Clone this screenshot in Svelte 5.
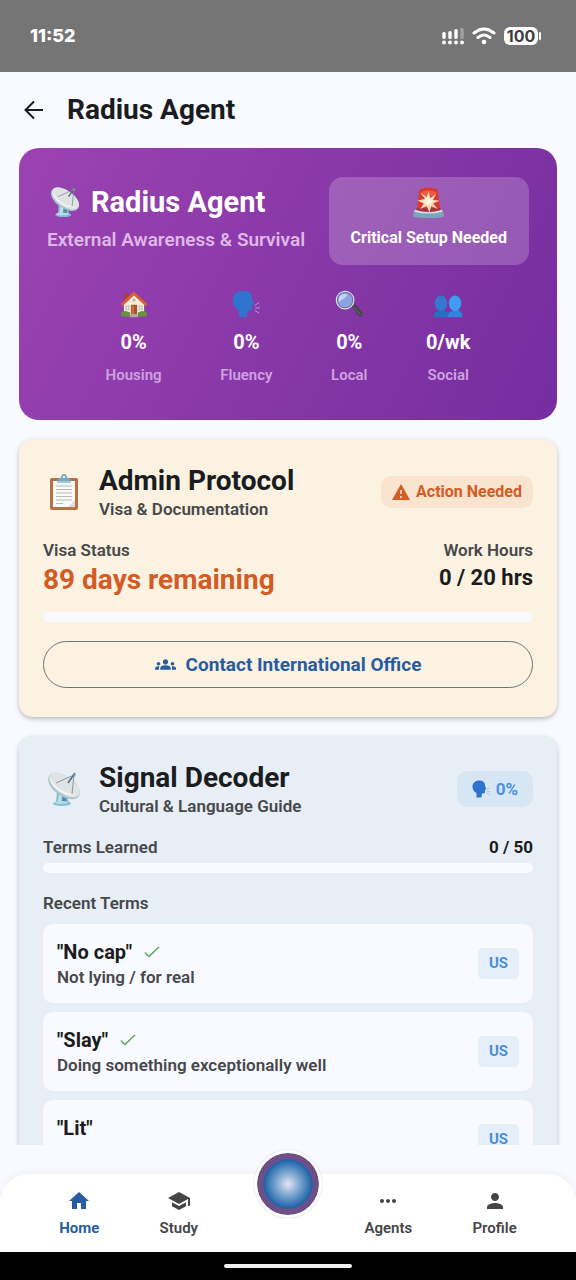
<script>
  const stats = [
    { icon: 'house', value: '0%', label: 'Housing' },
    { icon: 'speaking', value: '0%', label: 'Fluency' },
    { icon: 'search', value: '0%', label: 'Local' },
    { icon: 'people', value: '0/wk', label: 'Social' }
  ];
  const terms = [
    { word: '"No cap"', meaning: 'Not lying / for real', learned: true, region: 'US' },
    { word: '"Slay"', meaning: 'Doing something exceptionally well', learned: true, region: 'US' },
    { word: '"Lit"', meaning: '', learned: false, region: 'US' }
  ];
  const left = [
    { label: 'Home', active: true, d: 'M10 20v-6h4v6h5v-8h3L12 3 2 12h3v8z' },
    { label: 'Study', active: false, d: 'M5 13.180v4L12 21l7-3.820v-4L12 17l-7-3.820zM12 3 1 9l11 6 9-4.910V17h2V9L12 3z' }
  ];
  const right = [
    { label: 'Agents', active: false, d: 'M6 10c-1.100 0-2 .9-2 2s.9 2 2 2 2-.9 2-2-.9-2-2-2zm12 0c-1.100 0-2 .9-2 2s.9 2 2 2 2-.9 2-2-.9-2-2-2zm-6 0c-1.100 0-2 .9-2 2s.9 2 2 2 2-.9 2-2-.9-2-2-2z' },
    { label: 'Profile', active: false, d: 'M12 12c2.210 0 4-1.790 4-4s-1.790-4-4-4-4 1.790-4 4 1.790 4 4 4zm0 2c-2.670 0-8 1.340-8 4v2h16v-2c0-2.660-5.330-4-8-4z' }
  ];
</script>

{#snippet emoji(name)}
  <svg class="emoji" viewBox="0 0 36 36" aria-hidden="true">
    {#if name === 'dish'}
      <path d="M11 20l-1 12h13l-3-12z" fill="#8dbccb" />
      <path d="M17 21l-1 10h4l1-9z" fill="#4f8aa2" />
      <path d="M13 23l-1 8h3l1-8z" fill="#c3e2ea" />
      <ellipse cx="16" cy="32.500" rx="9" ry="2.500" fill="#83bfd0" />
      <ellipse cx="15" cy="31.500" rx="7" ry="1.500" fill="#b5dce5" />
      <ellipse cx="18" cy="15" rx="18" ry="10" transform="rotate(35 18 15)" fill="#a6c5cf" />
      <ellipse cx="18.500" cy="14" rx="17.500" ry="9" transform="rotate(35 18.500 14)" fill="#e0e3e4" />
      <path d="M4 6c3 9 14 18 27 17-10 4-26-5-27-17z" fill="#f5f7f7" />
      <path d="M10 12L28 4M26 23l2-19" stroke="#6d8793" stroke-width=".8" fill="none" />
      <path d="M22 12l7-10" stroke="#4e6e83" stroke-width="1.600" />
      <circle cx="28" cy="4" r="1.600" fill="#7694a5" />
    {:else if name === 'siren'}
      <path d="M5 27L8 5q1-3 10-3t10 3l3 22z" fill="#d93a2b" />
      <path d="M9 7q9-4 18 0l-1 4H10z" fill="#ef5b42" />
      <path d="M5 24h26v4H5z" fill="#a83338" />
      <path d="M18 6l2 7 6-4-3 6 7 1-7 3 5 6-7-3-2 7-3-7-7 3 4-6-7-3 8-2-4-6 6 4z" fill="#ffd9b8" />
      <circle cx="18" cy="16.500" r="4" fill="#fff3dd" />
      <path d="M2 27q16 4 32 0l1 6q-1 2-17 2T1 33z" fill="#7ea3bf" />
      <path d="M3 26q15 5 30 0v2q-15 4-30 0z" fill="#d5e1e8" />
    {:else if name === 'house'}
      <path d="M6 4h5v12H6z" fill="#a84432" />
      <path d="M5 17L18 5l13 12v15H5z" fill="#f8ecd2" />
      <path d="M18 2L1 18l2 3L18 7l15 14 2-3z" fill="#d95f39" />
      <path d="M14 19h8v14h-8z" fill="#a65331" />
      <path d="M15 20h3v12h-3z" fill="#c87343" />
      <path d="M7 20h5v6H7zM24 20h5v6h-5z" fill="#a9c0c4" />
      <path d="M9.500 20v6M26.500 20v6M7 23h5M24 23h5" stroke="#f8ecd2" stroke-width="1" />
      <circle cx="18" cy="13" r="2" fill="#b9b8a4" />
      <path d="M1 29q5-4 12 0v5H2zM23 29q6-4 12 0l-1 5H23z" fill="#67933f" />
      <path d="M14 31h8l2 4H12z" fill="#b1a69b" />
    {:else if name === 'speaking'}
      <path d="M9 35V26C4 24 1 19 1 13 1 6 7 1 14 1c8 0 12 4 12 10l2 6c1 2-1 2-2 2v5c0 2-2 3-6 3l-1 8z" fill="#2f73cf" />
      <path d="M29 20l6-4M30 23h6M29 26l6 4" stroke="#a8a7df" stroke-width="1.200" />
    {:else if name === 'search'}
      <path d="M22 22l4-4 9 11q1 3-1 5-2 1-4-1z" fill="#454746" />
      <path d="M24 22l9 10" stroke="#777b7c" stroke-width="1" />
      <circle cx="13" cy="13" r="12" fill="#dce0e6" />
      <circle cx="13" cy="13" r="10.500" fill="#536589" />
      <circle cx="13" cy="13" r="9.500" fill="#8ea2e2" />
      <path d="M5 15Q3 5 13 5q5 1 1 4T5 15z" fill="#c6d0fa" />
    {:else if name === 'people'}
      <path d="M0 35v-3q0-4 6-5l1-3h6l1 3q4 1 5 5v3z" fill="#286fc0" />
      <ellipse cx="9" cy="17" rx="8" ry="10" fill="#3778cf" />
      <path d="M18 35v-3q0-4 6-5l1-3h6l1 3q4 1 4 5v3z" fill="#2d87db" />
      <ellipse cx="27" cy="17" rx="8" ry="10" fill="#409cf1" />
    {:else if name === 'clipboard'}
      <rect x="4" y="4" width="28" height="32" rx="2" fill="#b67146" />
      <path d="M7 7h22v26H7z" fill="#f9f9f8" />
      <path d="M29 33v-7l-7 7z" fill="#dedfdd" />
      <path d="M10 12h16M10 15.500h16M10 19h16M10 22.500h16M10 26h16M10 29.500h7" stroke="#b3b9bc" stroke-width="1" />
      <path d="M11 8q0-4 4-4 0-4 3-4t3 4q4 0 4 4z" fill="#77a6ba" />
      <path d="M11 7h14v2H11z" fill="#a9cbd6" />
      <circle cx="18" cy="3" r="1.200" fill="#ecf6f7" />
    {/if}
  </svg>
{/snippet}

{#snippet navItem(item)}
  <a class="nav-item" class:active={item.active} href="#{item.label.toLowerCase()}" aria-current={item.active ? 'page' : undefined}>
    <svg viewBox="0 0 24 24" aria-hidden="true"><path d={item.d} /></svg>
    <span>{item.label}</span>
  </a>
{/snippet}

<div class="app">
  <div class="status">
    <span class="time">11:52</span>
    <div class="indicators">
      <svg class="signal" viewBox="0 0 22 18" aria-hidden="true">
        <g fill="#fff">
          <circle cx="2" cy="15.500" r="2" /><circle cx="8" cy="15.500" r="2" /><circle cx="14" cy="15.500" r="2" /><circle cx="20" cy="15.500" r="2" />
          <rect x="0.300" y="5" width="3.400" height="7" rx="1.500" /><rect x="6.300" y="4" width="3.400" height="8" rx="1.500" /><rect x="12.300" y="2" width="3.400" height="10" rx="1.500" />
        </g>
        <rect x="18.300" y="1" width="3.400" height="11" rx="1.500" fill="#a2a2a2" />
      </svg>
      <svg class="wifi" viewBox="0 0 24 18" aria-hidden="true">
        <path d="M2 6q10-8 20 0M6 10.500q6-5 12 0" fill="none" stroke="#fff" stroke-width="3" stroke-linecap="round" />
        <circle cx="12" cy="15" r="2.300" fill="#fff" />
      </svg>
      <div class="battery"><span>100</span><i></i></div>
    </div>
  </div>

  <header>
    <button class="back" aria-label="Back">
      <svg viewBox="0 0 20 20" aria-hidden="true"><path d="M19 10H2M10 1.500L1.500 10l8.500 8.500" fill="none" stroke="#1b1c20" stroke-width="2" /></svg>
    </button>
    <h1>Radius Agent</h1>
  </header>

  <main>
    <section class="hero">
      <div class="hero-top">
        <div>
          <h2>{@render emoji('dish')}Radius Agent</h2>
          <p>External Awareness &amp; Survival</p>
        </div>
        <div class="alert">
          {@render emoji('siren')}
          <strong>Critical Setup Needed</strong>
        </div>
      </div>
      <div class="stats">
        {#each stats as s}
          <div class="stat">
            {@render emoji(s.icon)}
            <strong>{s.value}</strong>
            <span>{s.label}</span>
          </div>
        {/each}
      </div>
    </section>

    <section class="card admin">
      <div class="card-head">
        {@render emoji('clipboard')}
        <div class="titles">
          <h2>Admin Protocol</h2>
          <p>Visa &amp; Documentation</p>
        </div>
        <div class="chip warn">
          <svg viewBox="0 0 18 16" aria-hidden="true"><path d="M9 0L0 16h18z" fill="#d55b25" /><path d="M9 6v4M9 12v2" stroke="#f8e4cf" stroke-width="1.600" /></svg>
          Action Needed
        </div>
      </div>
      <div class="row figures">
        <div>
          <p>Visa Status</p>
          <strong class="days">89 days remaining</strong>
        </div>
        <div class="end">
          <p>Work Hours</p>
          <strong>0 / 20 hrs</strong>
        </div>
      </div>
      <div class="track" role="progressbar" aria-label="Work Hours" aria-valuenow="0" aria-valuemax="20"></div>
      <button class="contact">
        <svg viewBox="0 0 24 12" aria-hidden="true">
          <path d="M12 6.750c1.630 0 3.070.39 4.240.9 1.080.48 1.760 1.560 1.760 2.730V12H6v-1.610c0-1.180.68-2.260 1.760-2.730 1.170-.52 2.610-.91 4.240-.91zM4 7c1.100 0 2-.9 2-2s-.9-2-2-2-2 .9-2 2 .9 2 2 2zm1.130 1.100C4.760 8.040 4.390 8 4 8c-.99 0-1.930.21-2.780.58C.48 8.900 0 9.620 0 10.430V12h4.500v-1.610c0-.83.23-1.610.63-2.290zM20 7c1.100 0 2-.9 2-2s-.9-2-2-2-2 .9-2 2 .9 2 2 2zm4 3.430c0-.81-.48-1.530-1.220-1.850C21.930 8.210 20.990 8 20 8c-.39 0-.76.04-1.130.1.400.68.63 1.460.63 2.290V12H24v-1.570zM12 0c1.660 0 3 1.340 3 3s-1.340 3-3 3-3-1.340-3-3 1.340-3 3-3z" fill="currentColor" />
        </svg>
        Contact International Office
      </button>
    </section>

    <section class="card decoder">
      <div class="card-head">
        {@render emoji('dish')}
        <div class="titles">
          <h2>Signal Decoder</h2>
          <p>Cultural &amp; Language Guide</p>
        </div>
        <div class="chip info">{@render emoji('speaking')}0%</div>
      </div>
      <div class="row">
        <p>Terms Learned</p>
        <strong class="count">0 / 50</strong>
      </div>
      <div class="track" role="progressbar" aria-label="Terms Learned" aria-valuenow="0" aria-valuemax="50"></div>
      <h3>Recent Terms</h3>
      <ul>
        {#each terms as t}
          <li>
            <div>
              <strong>{t.word}{#if t.learned}<svg viewBox="0 0 16 12" aria-hidden="true"><path d="M1 6.500L5 10.500 15 1" fill="none" stroke="#5aa85e" stroke-width="1.500" /></svg>{/if}</strong>
              {#if t.meaning}<p>{t.meaning}</p>{/if}
            </div>
            <span class="region">{t.region}</span>
          </li>
        {/each}
      </ul>
    </section>
  </main>

  <nav>
    {#each left as item}{@render navItem(item)}{/each}
    <span class="slot"></span>
    {#each right as item}{@render navItem(item)}{/each}
    <button class="orb" aria-label="Assistant"></button>
  </nav>
  <div class="gesture"><i></i></div>
</div>

<style>
  :global(body) { margin: 0; background: #f9faff; }
  * { box-sizing: border-box; }
  .app {
    display: flex; flex-direction: column; height: 100vh;
    font-family: Roboto, sans-serif; color: #1b1c20; background: #f9faff;
  }
  h1, h2, h3, p, ul { margin: 0; padding: 0; }
  button { font: inherit; cursor: pointer; padding: 0; }
  svg { display: block; flex: none; }

  .status {
    flex: none; display: flex; justify-content: space-between; align-items: center;
    height: 72px; padding: 0 35px 0 30px; background: #757575; color: #fff;
  }
  .time { font: 800 18px/24px Inter, sans-serif; }
  .indicators { display: flex; align-items: center; gap: 8px; }
  .signal { width: 22px; height: 18px; }
  .wifi { width: 24px; height: 18px; }
  .battery { display: flex; align-items: center; gap: 1px; }
  .battery span {
    width: 34px; border-radius: 6px; background: #fff; color: #3d3d3d; text-align: center;
    font: 700 16px/18px Inter, sans-serif;
  }
  .battery i { width: 2px; height: 8px; border-radius: 1px; background: #fff; }

  header { flex: none; display: flex; align-items: center; gap: 23px; height: 76px; padding: 0 24px; }
  .back { border: 0; background: none; }
  .back svg { width: 20px; height: 20px; }
  h1 { font-size: 28px; line-height: 36px; font-weight: 700; }

  main {
    flex: 1; min-height: 0; overflow: hidden auto; scrollbar-width: none;
    display: flex; flex-direction: column; gap: 19px; padding: 0 19px;
  }
  .hero {
    flex: none; padding: 29px 28px 34px; border-radius: 20px; color: #fff;
    background: linear-gradient(117deg, #9c43b2, #752d9f);
  }
  .hero-top { display: flex; justify-content: space-between; gap: 12px; }
  .hero h2 { display: flex; align-items: center; gap: 10px; padding: 6px 0 0 2px; font-size: 29px; line-height: 38px; font-weight: 700; }
  .hero h2 .emoji { width: 32px; height: 32px; }
  .hero-top p { margin-top: 6px; font-size: 19px; line-height: 26px; font-weight: 600; color: #deb7e8; }
  .alert {
    display: flex; flex-direction: column; align-items: center; gap: 8px;
    padding: 9px 22px 16px; border-radius: 14px; background: #ffffff33;
  }
  .alert .emoji { width: 33px; height: 33px; }
  .alert strong { font-size: 16px; line-height: 22px; white-space: nowrap; }
  .stats { display: flex; justify-content: space-evenly; margin-top: 25px; }
  .stat { display: flex; flex-direction: column; align-items: center; }
  .stat .emoji { width: 28px; height: 28px; }
  .stat strong { margin-top: 11px; font-size: 20px; line-height: 26px; }
  .stat span { margin-top: 9px; font-size: 15px; line-height: 22px; font-weight: 600; color: #cfa2e0; }

  .card { flex: none; padding: 24px; border-radius: 14px; box-shadow: 0 2px 5px #00000040; }
  .admin { background: #fcf2e2; padding-bottom: 29px; }
  .decoder { background: #e7eef5; }
  .card-head { display: flex; align-items: center; }
  .card-head > .emoji { width: 36px; height: 36px; margin: 0 17px 0 3px; }
  .titles { flex: 1; }
  .card h2 { font-size: 28px; line-height: 35px; font-weight: 700; }
  .card p { font-size: 17px; line-height: 22px; font-weight: 600; color: #47484a; }
  .chip { display: flex; align-items: center; border-radius: 10px; font-weight: 700; white-space: nowrap; }
  .warn { gap: 6px; padding: 5px 11px; font-size: 16px; line-height: 22px; color: #d55b25; background: #f8e4cf; }
  .warn svg { width: 18px; height: 16px; }
  .info { gap: 6px; padding: 6px 15px; font-size: 17px; line-height: 24px; color: #4a90e2; background: #d7e6f5; }
  .info .emoji { width: 18px; height: 18px; }
  .row { display: flex; justify-content: space-between; margin-top: 19px; }
  .figures strong { display: block; font-size: 22px; line-height: 34px; }
  .figures .days { font-size: 28px; line-height: 37px; color: #d55b25; }
  .end { text-align: right; }
  .count { font-size: 17px; line-height: 22px; }
  .track { height: 10px; border-radius: 5px; background: #f9faff; }
  .admin .track { margin-top: 14px; }
  .decoder .track { margin-top: 5px; }
  .contact {
    display: flex; align-items: center; justify-content: center; gap: 10px;
    width: 100%; height: 47px; margin-top: 19px; border: 1px solid #74747a; border-radius: 24px;
    background: none; color: #275da0; font-size: 19px; font-weight: 700;
  }
  .contact svg { width: 21px; height: 11px; }
  h3 { margin: 19px 0 10px; font-size: 17px; line-height: 22px; font-weight: 600; color: #47484a; }
  ul { display: flex; flex-direction: column; gap: 9px; list-style: none; }
  li {
    display: flex; align-items: center; justify-content: space-between;
    min-height: 79px; padding: 14px; border-radius: 10px; background: #f9faff;
  }
  li > div { align-self: flex-start; }
  li strong { display: flex; align-items: center; gap: 12px; font-size: 20px; line-height: 28px; }
  li strong svg { width: 16px; height: 12px; }
  .region { padding: 4px 11px; border-radius: 5px; background: #e5effa; color: #4a90d9; font-size: 15px; line-height: 23px; font-weight: 700; }

  nav {
    position: relative; flex: none; display: flex; justify-content: space-evenly; align-items: flex-start;
    margin-top: 29px; padding: 15px 0 12px; border-radius: 29px 29px 0 0;
    background: #fff; box-shadow: 0 -2px 8px #0000000a;
  }
  .nav-item {
    display: flex; flex-direction: column; align-items: center; gap: 3px; padding: 0 1px;
    color: #444547; font-size: 15px; line-height: 24px; font-weight: 600; text-decoration: none;
  }
  .nav-item.active { color: #275da0; font-weight: 700; }
  .nav-item svg { width: 24px; height: 24px; fill: currentColor; }
  .slot { width: 48px; }
  /* Floats over the top edge of the bar */
  .orb {
    position: absolute; left: 50%; top: -24px; transform: translateX(-50%);
    width: 68px; height: 68px; border: 3px solid #fff; border-radius: 50%;
    background: radial-gradient(circle, #e3e6f5 0, #79a5d0 12px, #1e63a8 24px, #6e5088 25px) padding-box;
    box-shadow: 0 0 1px #00000066;
  }
  .gesture { flex: none; display: flex; align-items: center; justify-content: center; height: 28px; background: #000; }
  .gesture i { width: 128px; height: 4px; border-radius: 2px; background: #f1f1f1; }
</style>
